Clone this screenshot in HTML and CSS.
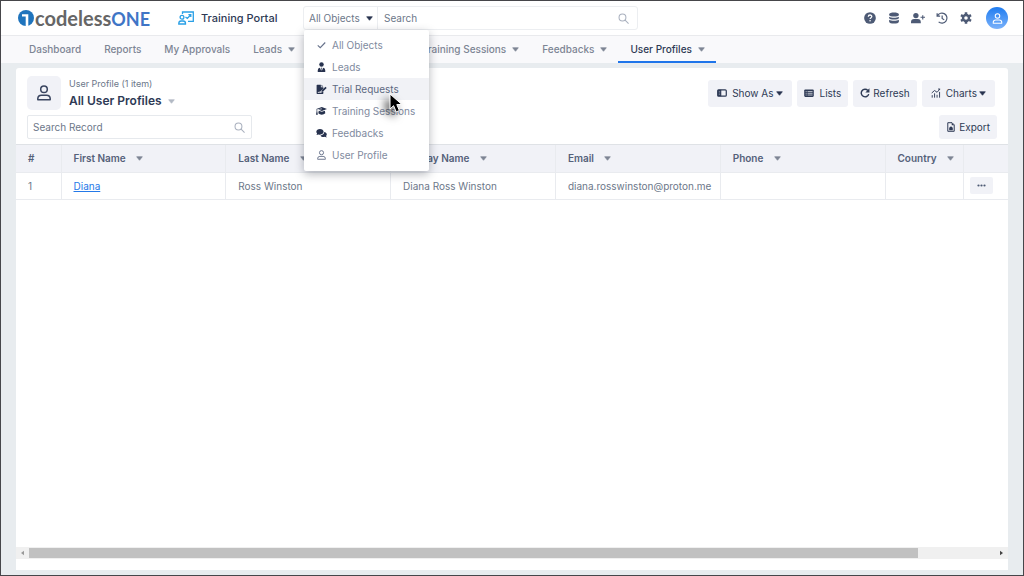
FILE: index.html
```html
<!DOCTYPE html>
<html lang="en">
<head>
<meta charset="utf-8">
<title>Training Portal - User Profiles</title>
<link rel="stylesheet" href="styles.css">
</head>
<body>
<svg class="sprite" aria-hidden="true">
  <symbol id="user" viewBox="0 0 16 16"><g fill="none" stroke="currentColor" stroke-width="1.5"><circle cx="8" cy="4.3" r="3.3"/><path d="M1.8 14.8v-1.2a3.6 3.6 0 0 1 3.6-3.4h5.2a3.6 3.6 0 0 1 3.6 3.4v1.2z" stroke-linejoin="round"/></g></symbol>
  <symbol id="search" viewBox="0 0 16 16"><g fill="none" stroke="currentColor" stroke-width="1.5" stroke-linecap="round"><circle cx="6.5" cy="6.5" r="5"/><path d="M10.3 10.3 15 15"/></g></symbol>
  <symbol id="caret" viewBox="0 0 8 5"><path d="M.8.5h6.4L4 4.5z" fill="currentColor" stroke="currentColor" stroke-width=".8" stroke-linejoin="round"/></symbol>
</svg>

<header class="topbar">
  <a class="logo" href="#" aria-label="codelessONE">
    <svg class="logo-mark" viewBox="0 0 16 16" aria-hidden="true"><circle cx="8" cy="8" r="8" fill="#1f74bd"/><path d="M4 4.300h6.300v11.700H7.700V6.500H4z" fill="#fff"/></svg>
    <span class="logo-text">codeless<span class="logo-one">ONE</span></span>
  </a>
  <a class="portal" href="#">
    <svg class="portal-icon" viewBox="0 0 16 14" fill="none" stroke="#2aa0e6" stroke-width="1.3" aria-hidden="true"><path d="M4.500 3V1h10.800v9.400H10"/><circle cx="4" cy="6.300" r="1.900"/><path d="M.8 13v-.8A2.300 2.300 0 0 1 3 10h2.200a2.300 2.300 0 0 1 2.300 2.200v.8zM7.500 6l1.800 1.400L12.600 4M10.400 3.600h2.400V6"/></svg>
    <span>Training Portal</span>
  </a>
  <div class="global-search">
    <div class="scope">
      <button class="scope-button" type="button" aria-expanded="true">All Objects <svg class="caret dark"><use href="#caret"/></svg></button>
      <ul class="menu">
        <li><button class="menu-item" type="button"><svg class="menu-icon" viewBox="0 0 16 16"><path d="M2 8.500 6 12.300 14 4" fill="none" stroke="#66718a" stroke-width="1.800"/></svg>All Objects</button></li>
        <li><button class="menu-item" type="button"><svg class="menu-icon" viewBox="0 0 16 16" fill="currentColor"><circle cx="8" cy="4" r="3.600"/><path d="M2 16v-3a4 4 0 0 1 3.500-4L7.400 14l.3-3.200L7 9h2l-.7 1.800.3 3.200 1.900-5A4 4 0 0 1 14 13v3z"/></svg>Leads</button></li>
        <li><button class="menu-item is-active" type="button"><svg class="menu-icon" viewBox="0 0 18 16" fill="currentColor"><path d="M1 2a1 1 0 0 1 1-1h6v4h4v2l-5 5-.6 1.600-1-2-1.200 1.500H3V14h5l4-2v3a1 1 0 0 1-1 1H2a1 1 0 0 1-1-1zM9 1l3 3H9zM15.500 4.200l2 2-6 6-2.600.6.6-2.600z"/></svg>Trial Requests</button></li>
        <li><button class="menu-item" type="button"><svg class="menu-icon" viewBox="0 0 18 16" fill="currentColor"><path d="M9.500 1.500 18 4.700 9.500 8 3.500 5.700 9.500 5V4L2 5.200v3L3 14H0l1-6V5L.5 4.700zM4.500 7.600l5 1.800 5-1.800.7 4.200c-2.800 2.900-8.700 2.900-11.400 0z"/></svg>Training Sessions</button></li>
        <li><button class="menu-item" type="button"><svg class="menu-icon" viewBox="0 0 18 16" fill="currentColor"><path d="M6.500 1.500c3.300 0 6 2 6 4.600s-2.700 4.600-6 4.600c-.8 0-1.600-.1-2.300-.4L.8 11.400l1-2.600A4.200 4.200 0 0 1 .5 6.100c0-2.600 2.700-4.600 6-4.600z"/><path d="M13.500 6.200c2.500.4 4.200 2.100 4.200 4 0 1-.4 1.900-1.200 2.600l1 2.500-3.300-1.100c-2.700.8-5.700-.1-6.900-2.300 3.600-.4 6.300-2.700 6.200-5.700z"/></svg>Feedbacks</button></li>
        <li><button class="menu-item" type="button"><svg class="menu-icon muted"><use href="#user"/></svg>User Profile</button></li>
      </ul>
    </div>
    <input class="global-input" type="search" placeholder="Search" aria-label="Search">
    <svg class="search-icon"><use href="#search"/></svg>
  </div>
  <div class="tools">
    <button class="tool" type="button" aria-label="Help"><svg viewBox="0 0 16 16"><circle cx="8" cy="8" r="7.800" fill="currentColor"/><path d="M5.700 6.200c.1-3 4.800-2.800 4.700-.2C10.400 7.600 8.100 7.500 8.100 9.400" fill="none" stroke="#fff" stroke-width="1.700"/><circle cx="8.100" cy="11.700" r="1.100" fill="#fff"/></svg></button>
    <button class="tool" type="button" aria-label="Data"><svg viewBox="0 0 16 16" fill="currentColor"><path d="M1.500 3c0-3.300 13-3.300 13 0v1c0 2.700-13 2.700-13 0zM1.500 6.200c3 1.800 10 1.800 13 0V8c0 2.700-13 2.700-13 0zM1.500 10.200c3 1.800 10 1.800 13 0V13c0 3.300-13 3.300-13 0z"/></svg></button>
    <button class="tool" type="button" aria-label="Invite user"><svg class="wide" viewBox="0 0 20 16" fill="currentColor"><circle cx="7" cy="4.500" r="3.800"/><path d="M0 15.500v-1.500a4.500 4.500 0 0 1 4.500-4.500h5a4.500 4.500 0 0 1 4.500 4.500v1.500zM16 4h1.600v2.200H20v1.600h-2.400V10H16V7.800h-2.400V6.200H16z"/></svg></button>
    <button class="tool" type="button" aria-label="History"><svg viewBox="0 0 16 16" fill="none" stroke="currentColor" stroke-width="1.600"><path d="M1.500 1.500v4h4M2 5a6.700 6.700 0 1 1 1.500 8.200M8.200 4.500v4l2.800 2"/></svg></button>
    <button class="tool" type="button" aria-label="Settings"><svg viewBox="0 0 16 16"><circle cx="8" cy="8" r="4" fill="none" stroke="currentColor" stroke-width="3.200"/><path d="M8 .3v3M8 12.700v3M1.300 4.150l2.600 1.500M12.100 10.350l2.600 1.500M1.300 11.850l2.600-1.500M12.100 5.650l2.600-1.500" stroke="currentColor" stroke-width="3.400"/></svg></button>
    <button class="avatar" type="button" aria-label="Account"><svg><use href="#user"/></svg></button>
  </div>
</header>

<nav class="tabs">
  <a class="tab" href="#">Dashboard</a>
  <a class="tab" href="#">Reports</a>
  <a class="tab" href="#">My Approvals</a>
  <a class="tab" href="#">Leads <svg class="caret"><use href="#caret"/></svg></a>
  <a class="tab" href="#">Trial Requests <svg class="caret"><use href="#caret"/></svg></a>
  <a class="tab" href="#">Training Sessions <svg class="caret"><use href="#caret"/></svg></a>
  <a class="tab" href="#">Feedbacks <svg class="caret"><use href="#caret"/></svg></a>
  <a class="tab is-current" href="#" aria-current="page">User Profiles <svg class="caret"><use href="#caret"/></svg></a>
</nav>

<main class="card">
  <div class="card-head">
    <div class="title-row">
      <span class="title-icon"><svg><use href="#user"/></svg></span>
      <div class="titles">
        <span class="subtitle">User Profile (1 item)</span>
        <h1 class="title">All User Profiles <svg class="caret pale"><use href="#caret"/></svg></h1>
      </div>
      <div class="actions">
        <button class="btn btn-wide" type="button"><svg viewBox="0 0 14 12"><rect x="1" y="1.500" width="12" height="9" rx="1.500" fill="none" stroke="currentColor" stroke-width="1.700"/><path d="M1 1.500h5v9H1z" fill="currentColor"/><path d="M2.500 4h2M2.500 6h2M2.500 8h2" stroke="#aab1c2" stroke-width=".8"/></svg><span>Show As <svg class="caret dark"><use href="#caret"/></svg></span></button>
        <button class="btn btn-lists" type="button"><svg viewBox="0 0 14 12"><rect x=".3" y="1" width="13.400" height="10.500" rx="1.500" fill="currentColor"/><path d="M2.300 4h1.400M5 4h7M2.300 6.400h1.400M5 6.400h7M2.300 8.800h1.400M5 8.800h7" stroke="#f1f2f7" stroke-width="1"/></svg>Lists</button>
        <button class="btn" type="button"><svg viewBox="0 0 14 14"><path d="M12.200 8.500A5.300 5.300 0 1 1 11 3.500" fill="none" stroke="currentColor" stroke-width="2"/><path d="M13.200.5v5.700H7.500z" fill="currentColor"/></svg>Refresh</button>
        <button class="btn btn-wide" type="button"><svg viewBox="0 0 14 14" fill="none" stroke="currentColor" stroke-width="1.300"><path d="M1.700 13.500V10M5 13.500V7.500M8.500 13.500V9.500M12 13.500V5.500M1 7l4-3.500 3.500 2.500L12.500 1.500M9.800 1.500h3"/></svg><span>Charts <svg class="caret dark"><use href="#caret"/></svg></span></button>
      </div>
    </div>
    <div class="filter-row">
      <div class="record-search">
        <input class="record-input" type="search" placeholder="Search Record" aria-label="Search Record">
        <svg class="search-icon"><use href="#search"/></svg>
      </div>
      <button class="btn btn-export" type="button"><svg viewBox="0 0 12 14"><path d="M1.500 1h6l3 3v9h-9z" fill="none" stroke="currentColor" stroke-width="1.400" stroke-linejoin="round"/><path d="M7 1v3.500h3.500M3.500 8l2.500-2 2.500 2v3.500h-5z" fill="currentColor"/></svg>Export</button>
    </div>
  </div>

  <div class="table-area">
    <table class="records">
      <colgroup><col class="c-num"><col><col><col><col><col><col class="c-country"><col class="c-act"></colgroup>
      <thead>
        <tr>
          <th>#</th>
          <th>First Name <svg class="sort"><use href="#caret"/></svg></th>
          <th>Last Name <svg class="sort"><use href="#caret"/></svg></th>
          <th>Display Name <svg class="sort"><use href="#caret"/></svg></th>
          <th>Email <svg class="sort"><use href="#caret"/></svg></th>
          <th>Phone <svg class="sort"><use href="#caret"/></svg></th>
          <th>Country <svg class="sort"><use href="#caret"/></svg></th>
          <th></th>
        </tr>
      </thead>
      <tbody>
        <tr>
          <td>1</td>
          <td><a class="record-link" href="#">Diana</a></td>
          <td>Ross Winston</td>
          <td>Diana Ross Winston</td>
          <td>diana.rosswinston@proton.me</td>
          <td></td>
          <td></td>
          <td class="row-act"><button class="more" type="button" aria-label="More actions"><svg viewBox="0 0 9 3" fill="currentColor"><circle cx="1.500" cy="1.500" r="1.100"/><circle cx="4.500" cy="1.500" r="1.100"/><circle cx="7.500" cy="1.500" r="1.100"/></svg></button></td>
        </tr>
      </tbody>
    </table>
  </div>
  <div class="scrollbar" aria-hidden="true">
    <svg class="arrow off" viewBox="0 0 4 6"><path d="M4 0v6L0 3z" fill="currentColor"/></svg>
    <div class="track"><div class="thumb"></div></div>
    <svg class="arrow" viewBox="0 0 4 6"><path d="M0 0v6l4-3z" fill="currentColor"/></svg>
  </div>
</main>

<svg class="pointer" viewBox="0 0 14 20" aria-hidden="true"><path d="M1 1v15l3.600-3.300 2.600 6.200 3.200-1.400-2.600-5.900 5-.2z" fill="#000" stroke="#fff" stroke-width="1"/></svg>
</body>
</html>
```
FILE: styles.css
```css
* { box-sizing: border-box; }

body {
  margin: 0;
  min-height: 100vh;
  display: flex;
  flex-direction: column;
  border: 1px solid #46464a;
  background: #e8ecef;
  color: #6c7789;
  font: 10px/16px Inter, "Liberation Sans", sans-serif;
}

button, input { font: inherit; color: inherit; }
button { border: 0; padding: 0; background: none; cursor: pointer; }
a { color: inherit; text-decoration: none; }
svg { flex: none; }
.sprite { display: none; }

.caret { width: 7px; height: 5px; color: #7d8594; }
.caret.dark { color: #27324e; }
.caret.pale { color: #b2b9c4; }

.topbar {
  display: flex;
  align-items: center;
  height: 35px;
  padding: 0 15px 0 17px;
  background: #fff;
  border-bottom: 1px solid #e9eaed;
}

.logo { display: flex; align-items: center; gap: 1px; width: 160px; }
.logo-mark { width: 16px; height: 16px; }
.logo-text { font: 700 20px/24px Lato, sans-serif; color: #666; }
.logo-one { color: #3f75c6; font-size: 18px; }

.portal {
  display: flex;
  align-items: center;
  gap: 7px;
  width: 125px;
  color: #2e3a55;
  font-size: 11px;
  font-weight: 500;
  white-space: nowrap;
}
.portal-icon { width: 16px; height: 14px; }

.global-search {
  display: flex;
  align-items: center;
  flex: 0 1 335px;
  height: 24px;
  padding-right: 8px;
  border: 1px solid #eceef1;
  border-radius: 3px;
}
.scope { position: relative; align-self: stretch; width: 74px; border-right: 1px solid #eceef1; }
.scope-button { display: flex; align-items: center; gap: 6px; height: 100%; padding-left: 5px; white-space: nowrap; }
.global-input, .record-input {
  flex: 1;
  min-width: 0;
  border: 0;
  outline: 0;
  background: none;
  padding: 0 6px;
}
.global-input::placeholder, .record-input::placeholder { color: #6c7789; opacity: 1; }
.search-icon { width: 11px; height: 11px; color: #a9b0be; }

.menu {
  position: absolute;
  z-index: 5;
  top: 23px;
  left: 0;
  width: 125px;
  margin: 0;
  padding: 4px 0 5px;
  list-style: none;
  background: #fff;
  border-radius: 2px;
  box-shadow: 0 3px 10px rgba(40, 45, 60, .35);
}
.menu-item {
  display: flex;
  align-items: center;
  gap: 5px;
  width: 100%;
  height: 22px;
  padding-left: 12px;
  color: #808a9e;
  white-space: nowrap;
}
.menu-item.is-active { background: #f1f2f6; color: #5d6982; }
.menu-icon { width: 11px; height: 10px; color: #27324e; }
.menu-icon.muted { color: #66718a; }

.tools { display: flex; align-items: center; gap: 12px; margin-left: auto; color: #4d5a75; }
.tool { display: flex; justify-content: center; width: 12px; }
.tool svg { width: 12px; height: 12px; }
.tool .wide { width: 14px; }
.avatar {
  display: grid;
  place-items: center;
  width: 22px;
  height: 22px;
  margin-left: 2px;
  border-radius: 50%;
  background: linear-gradient(#1f7cf0, #7bb2fa);
  color: #fff;
}
.avatar svg { width: 11px; height: 11px; }

.tabs {
  display: flex;
  height: 27px;
  padding-left: 16px;
  background: #f9f9fb;
  color: #7d8594;
  font-weight: 500;
}
.tab {
  display: flex;
  align-items: center;
  gap: 6px;
  padding: 1px 11px 0 12px;
  border-bottom: 2px solid transparent;
  white-space: nowrap;
}
.tab.is-current { color: #2e3a55; border-color: #1f75ea; }

.card {
  display: flex;
  flex-direction: column;
  flex: 1;
  margin: 5px 15px;
  padding-bottom: 11px;
  background: #fff;
  border-radius: 3px 3px 0 0;
}
.card-head { padding: 8px 11px 5px; }
.title-row { display: flex; align-items: center; }
.title-icon {
  display: grid;
  place-items: center;
  width: 34px;
  height: 34px;
  border-radius: 5px;
  background: #f1f2f7;
  color: #3a4560;
}
.title-icon svg { width: 16px; height: 16px; }
.titles { display: flex; flex-direction: column; margin-left: 8px; }
.subtitle { font-size: 9px; }
.title {
  display: flex;
  align-items: center;
  gap: 6px;
  margin: 0;
  color: #2e3a55;
  font-size: 12px;
  line-height: 18px;
  font-weight: 600;
}

.actions { display: flex; gap: 5px; margin: 0 2px 0 auto; }
.btn {
  display: flex;
  align-items: center;
  justify-content: center;
  gap: 3px;
  height: 27px;
  padding: 0 7px;
  border-radius: 3px;
  background: #f1f2f7;
  color: #2e3a55;
  white-space: nowrap;
}
.btn > svg { width: 10px; height: 10px; }
.btn span { display: flex; align-items: center; gap: 2px; }
.btn-wide { gap: 5px; padding: 0 9px; }
.btn-lists { gap: 6px; }

.filter-row { display: flex; justify-content: space-between; margin-top: 5px; }
.record-search {
  display: flex;
  align-items: center;
  width: 225px;
  height: 24px;
  padding-right: 6px;
  border: 1px solid #e6e9ed;
  border-radius: 2px;
}
.record-input { padding-left: 5px; }
.btn-export { height: 24px; }

.table-area { flex: 1; overflow: hidden; border-top: 1px solid #dfe2e6; }
.records { width: 100%; border-collapse: collapse; table-layout: fixed; }
.records th, .records td {
  height: 27px;
  padding: 0 12px;
  border-right: 1px solid #e9ebef;
  border-bottom: 1px solid #e9ebef;
  text-align: left;
  white-space: nowrap;
}
.records th:last-child, .records td:last-child { border-right: 0; }
.records th { background: #f1f2f7; color: #55617a; font-weight: 600; }
.c-num { width: 45px; }
.c-country { width: 78px; }
.c-act { width: 45px; }
.sort { width: 7px; height: 5px; margin-left: 8px; vertical-align: 1px; color: #7d8594; }
.record-link { color: #2479e8; text-decoration: underline; }
.records .row-act { padding: 0 6px; }
.more { display: grid; place-items: center; width: 23px; height: 17px; border-radius: 2px; background: #f1f2f7; color: #4d5a75; }
.more svg { width: 9px; height: 3px; }

.scrollbar { display: flex; align-items: center; gap: 5px; height: 12px; padding: 0 5px; background: #f0f0f0; }
.arrow { width: 3px; height: 6px; color: #444; }
.arrow.off { color: #999; }
.track { flex: 1; height: 10px; }
.thumb { width: 92%; height: 100%; background: #c1c1c1; }

.pointer {
  position: absolute;
  z-index: 10;
  left: 389px;
  top: 93px;
  width: 14px;
  height: 20px;
  filter: drop-shadow(-4px 4px 4px rgba(0, 0, 0, .7));
}
```
